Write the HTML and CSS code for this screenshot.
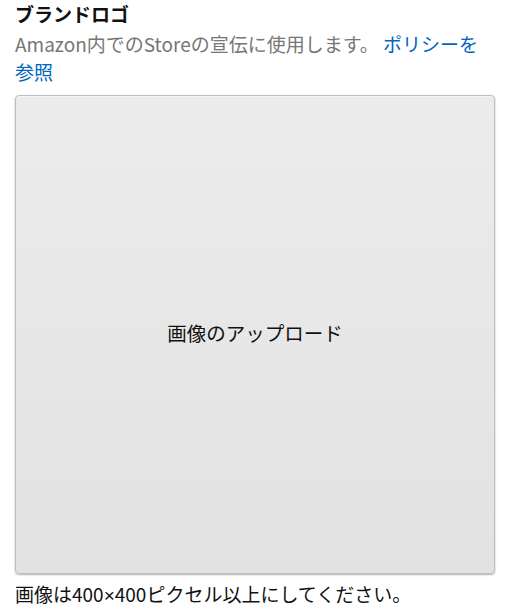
FILE: index.html
```html
<!DOCTYPE html>
<html lang="ja">
<head>
<meta charset="utf-8">
<link rel="stylesheet" href="styles.css">
</head>
<body>
<div class="section">
  <div class="title">ブランドロゴ</div>
  <p class="desc">Amazon内でのStoreの宣伝に使用します。 <a class="link" href="#">ポリシーを参照</a></p>
  <div class="upload"><span class="upload-label">画像のアップロード</span></div>
  <p class="hint">画像は400<span class="times">×</span>400ピクセル以上にしてください。</p>
</div>
</body>
</html>
```
FILE: styles.css
```css
html, body { margin: 0; padding: 0; background: #fff; }
body { font-family: "Noto Sans CJK JP", "Noto Sans", sans-serif; color: #111; }
.section { padding: 0 11px 0 15px; }
.title { font-size: 19px; font-weight: 700; line-height: 28px; margin: 0; }
.desc { font-size: 19px; line-height: 28px; color: #767676; margin: 2px 0 0; }
.link { color: #0066c0; text-decoration: none; }
.upload {
  margin-top: 9px;
  height: 477px;
  border: 1px solid #bdbdbd;
  border-radius: 4px;
  background: linear-gradient(#ececec, #e2e2e2);
  box-shadow: 0 1px 2px rgba(0,0,0,0.3), inset 0 1px 0 rgba(255,255,255,0.5);
  display: flex; align-items: center; justify-content: center;
}
.upload-label { font-size: 19.5px; color: #111; padding-bottom: 4px; }
.hint { font-size: 19px; line-height: 26px; margin: 7px 0 0; color: #111; }
.times { font-family: "Liberation Sans", sans-serif; }
```
